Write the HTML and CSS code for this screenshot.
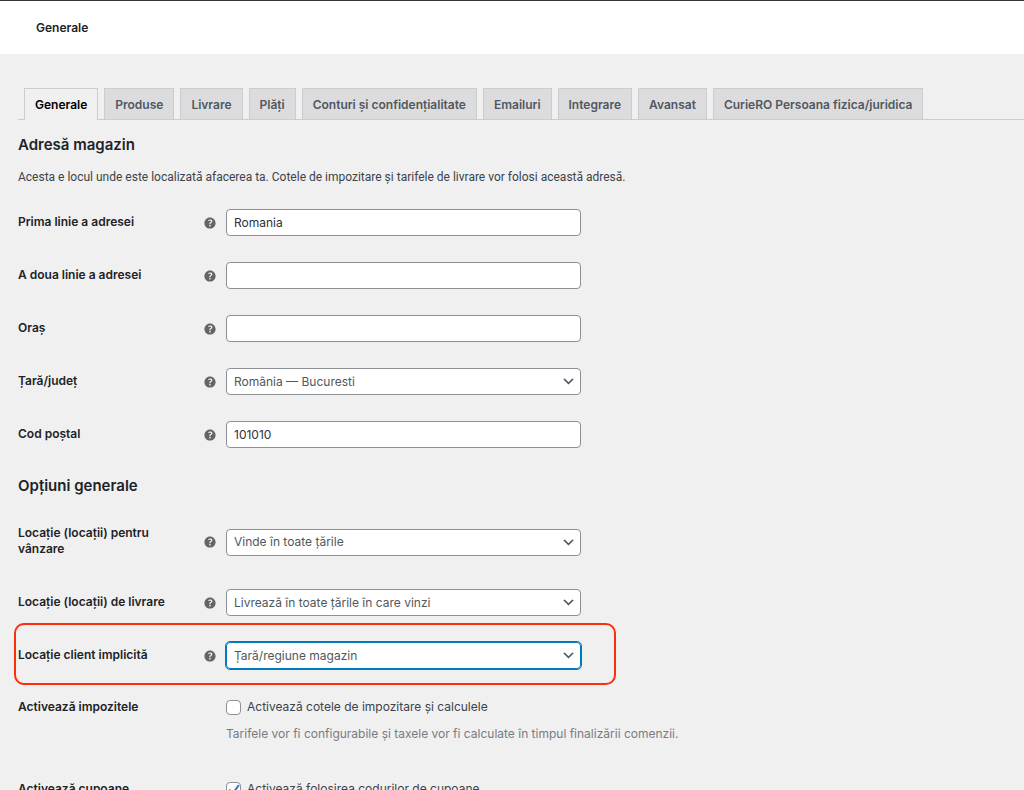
FILE: index.html
```html
<!DOCTYPE html>
<html lang="ro">
<head>
<meta charset="utf-8">
<meta name="viewport" content="width=device-width, initial-scale=1">
<title>Generale</title>
<link rel="stylesheet" href="styles.css">
</head>
<body>
<svg class="sprite" aria-hidden="true">
  <symbol id="help" viewBox="0 0 20 20">
    <path fill-rule="evenodd" d="M17 10c0-3.9-3.1-7-7-7s-7 3.1-7 7 3.100 7 7 7 7-3.100 7-7zM10.700 11.480H9.140v-.43c0-.38.08-.7.24-.98s.46-.57.880-.89c.41-.29.680-.530.810-.710.140-.180.200-.390.200-.620 0-.250-.090-.440-.280-.580-.190-.130-.450-.190-.790-.190-.580 0-1.250.190-2 .570l-.640-1.280c.870-.490 1.800-.740 2.770-.740.810 0 1.450.200 1.920.580.480.390.710.910.710 1.550 0 .430-.090.800-.290 1.110-.190.320-.570.670-1.110 1.060-.380.280-.610.490-.710.630-.100.150-.150.340-.150.570v.350zM9.230 14.220c-.180-.170-.270-.420-.270-.730 0-.330.080-.580.260-.750s.430-.250.770-.250c.320 0 .570.090.750.260s.270.420.270.740c0 .300-.090.550-.270.720-.180.180-.430.270-.750.270-.330 0-.580-.090-.760-.260z"/>
  </symbol>
  <symbol id="chevron" viewBox="0 0 20 20">
    <path d="M5 6l5 5 5-5 2 1-7 7-7-7 2-1z"/>
  </symbol>
</svg>

<header class="topbar"><h1 class="topbar-title">Generale</h1></header>

<main class="content">
  <nav class="tabs" aria-label="Setări">
    <a class="tab tab-active" href="#" aria-current="page">Generale</a>
    <a class="tab" href="#">Produse</a>
    <a class="tab" href="#">Livrare</a>
    <a class="tab" href="#">Plăți</a>
    <a class="tab" href="#">Conturi și confidențialitate</a>
    <a class="tab" href="#">Emailuri</a>
    <a class="tab" href="#">Integrare</a>
    <a class="tab" href="#">Avansat</a>
    <a class="tab" href="#">CurieRO Persoana fizica/juridica</a>
  </nav>

  <form>
    <section>
      <h2 class="heading">Adresă magazin</h2>
      <p class="intro">Acesta e locul unde este localizată afacerea ta. Cotele de impozitare și tarifele de livrare vor folosi această adresă.</p>
      <div class="fields">
        <div class="row">
          <label class="label" for="address1">Prima linie a adresei</label>
          <svg class="help"><use href="#help"/></svg>
          <input class="control" id="address1" type="text" value="Romania">
        </div>
        <div class="row">
          <label class="label" for="address2">A doua linie a adresei</label>
          <svg class="help"><use href="#help"/></svg>
          <input class="control" id="address2" type="text">
        </div>
        <div class="row">
          <label class="label" for="city">Oraș</label>
          <svg class="help"><use href="#help"/></svg>
          <input class="control" id="city" type="text">
        </div>
        <div class="row">
          <label class="label" for="country">Țară/județ</label>
          <svg class="help"><use href="#help"/></svg>
          <div class="select-wrap">
            <select class="control select" id="country"><option>România — Bucuresti</option></select>
            <svg class="chevron"><use href="#chevron"/></svg>
          </div>
        </div>
        <div class="row">
          <label class="label" for="postcode">Cod poștal</label>
          <svg class="help"><use href="#help"/></svg>
          <input class="control" id="postcode" type="text" value="101010">
        </div>
      </div>
    </section>

    <section>
      <h2 class="heading">Opțiuni generale</h2>
      <div class="fields fields-spaced">
        <div class="row">
          <label class="label" for="selling">Locație (locații) pentru vânzare</label>
          <svg class="help"><use href="#help"/></svg>
          <div class="select-wrap">
            <select class="control select" id="selling"><option>Vinde în toate țările</option></select>
            <svg class="chevron"><use href="#chevron"/></svg>
          </div>
        </div>
        <div class="row">
          <label class="label" for="shipping">Locație (locații) de livrare</label>
          <svg class="help"><use href="#help"/></svg>
          <div class="select-wrap">
            <select class="control select" id="shipping"><option>Livrează în toate țările în care vinzi</option></select>
            <svg class="chevron"><use href="#chevron"/></svg>
          </div>
        </div>
        <div class="row row-highlight">
          <label class="label" for="location">Locație client implicită</label>
          <svg class="help"><use href="#help"/></svg>
          <div class="select-wrap">
            <select class="control select control-focus" id="location"><option>Țară/regiune magazin</option></select>
            <svg class="chevron"><use href="#chevron"/></svg>
          </div>
        </div>
        <div class="row row-check">
          <span class="label" id="tax-label">Activează impozitele</span>
          <div class="option" role="group" aria-labelledby="tax-label">
            <label class="check-label"><input class="check" type="checkbox">Activează cotele de impozitare și calculele</label>
            <p class="description">Tarifele vor fi configurabile și taxele vor fi calculate în timpul finalizării comenzii.</p>
          </div>
        </div>
        <div class="row row-check">
          <span class="label" id="coupon-label">Activează cupoane</span>
          <div class="option" role="group" aria-labelledby="coupon-label">
            <label class="check-label"><span class="check-wrap"><input class="check" type="checkbox" checked><svg class="tick" viewBox="0 0 14 14"><path d="M3 7l3 4 6-8"/></svg></span>Activează folosirea codurilor de cupoane</label>
          </div>
        </div>
      </div>
    </section>
  </form>
</main>
</body>
</html>
```
FILE: styles.css
```css
*,
*::before {
  box-sizing: border-box;
}

html {
  height: 100%;
  overflow: hidden;
}

body {
  height: 100%;
  margin: 0;
  overflow: hidden;
  background: #f0f0f0;
  color: #3c434a;
  font-family: Inter, "Liberation Sans", sans-serif;
  font-size: 12px;
  line-height: 16px;
}

.sprite {
  display: none;
}

.topbar {
  padding: 19px 36px 18px;
  border-top: 1px solid #32373c;
  background: #fff;
}

.topbar-title {
  margin: 0;
  color: #1d2327;
  font-size: 12px;
  font-weight: 600;
  line-height: 16px;
}

.content {
  padding: 34px 0 0 18px;
}

.tabs {
  display: flex;
  gap: 6px;
  padding-left: 6px;
  border-bottom: 1px solid #cbccd0;
}

.tab {
  padding: 7px 10px 5px;
  border: 1px solid #cbccd0;
  border-bottom: 0;
  background: #dcdcde;
  color: #50575e;
  font-size: 12px;
  font-weight: 600;
  line-height: 18px;
  text-decoration: none;
  white-space: nowrap;
}

.tab-active {
  margin-bottom: -1px;
  background: #f0f0f0;
  color: #000;
}

.heading {
  margin: 15px 0 0;
  color: #1d2327;
  font-size: 15px;
  font-weight: 600;
  line-height: 20px;
}

.intro {
  margin: 14px 0 11px;
  font-family: Roboto, "Liberation Sans", sans-serif;
}

.fields-spaced {
  margin-top: 12px;
}

.row {
  display: grid;
  grid-template-columns: 176px 12px 355px;
  column-gap: 10px;
  align-items: center;
  min-height: 53px;
}

.row-highlight {
  position: relative;
}

.row-highlight::before {
  content: "";
  position: absolute;
  top: -6px;
  left: -4px;
  width: 602px;
  height: 62px;
  border: 2px solid #ff2d0c;
  border-radius: 10px;
  pointer-events: none;
}

.label {
  padding: 17px 20px 19px 0;
  color: #1d2327;
  font-size: 12px;
  font-weight: 600;
}

.help {
  width: 16px;
  height: 16px;
  margin-left: -2px;
  fill: #646464;
}

.control {
  display: block;
  width: 100%;
  height: 27px;
  margin: 0;
  padding: 0 7px;
  border: 1px solid #8c8f94;
  border-radius: 4px;
  background: #fff;
  color: #2c3338;
  font: inherit;
}

.select-wrap {
  position: relative;
}

.select {
  appearance: none;
  padding-right: 24px;
  color: #50575e;
}

.control-focus {
  border-color: #007cba;
  outline: 1px solid #007cba;
  outline-offset: 0;
}

.chevron {
  position: absolute;
  top: 6px;
  right: 5px;
  width: 15px;
  height: 15px;
  fill: #50575e;
  pointer-events: none;
}

.row-check {
  align-items: start;
  min-height: 82px;
}

.option {
  grid-column: 3 / 4;
  padding-top: 17px;
  white-space: nowrap;
}

.check-label {
  display: flex;
  gap: 6px;
  align-items: center;
}

.check-wrap {
  position: relative;
  display: flex;
}

.check {
  appearance: none;
  width: 15px;
  height: 15px;
  margin: 0;
  border: 1px solid #8c8f94;
  border-radius: 4px;
  background: #fff;
}

.tick {
  position: absolute;
  inset: 0;
  width: 15px;
  height: 15px;
  fill: none;
  stroke: #3582c4;
  stroke-width: 2;
  pointer-events: none;
}

.description {
  margin: 11px 0 0;
  color: #787c82;
}
```
